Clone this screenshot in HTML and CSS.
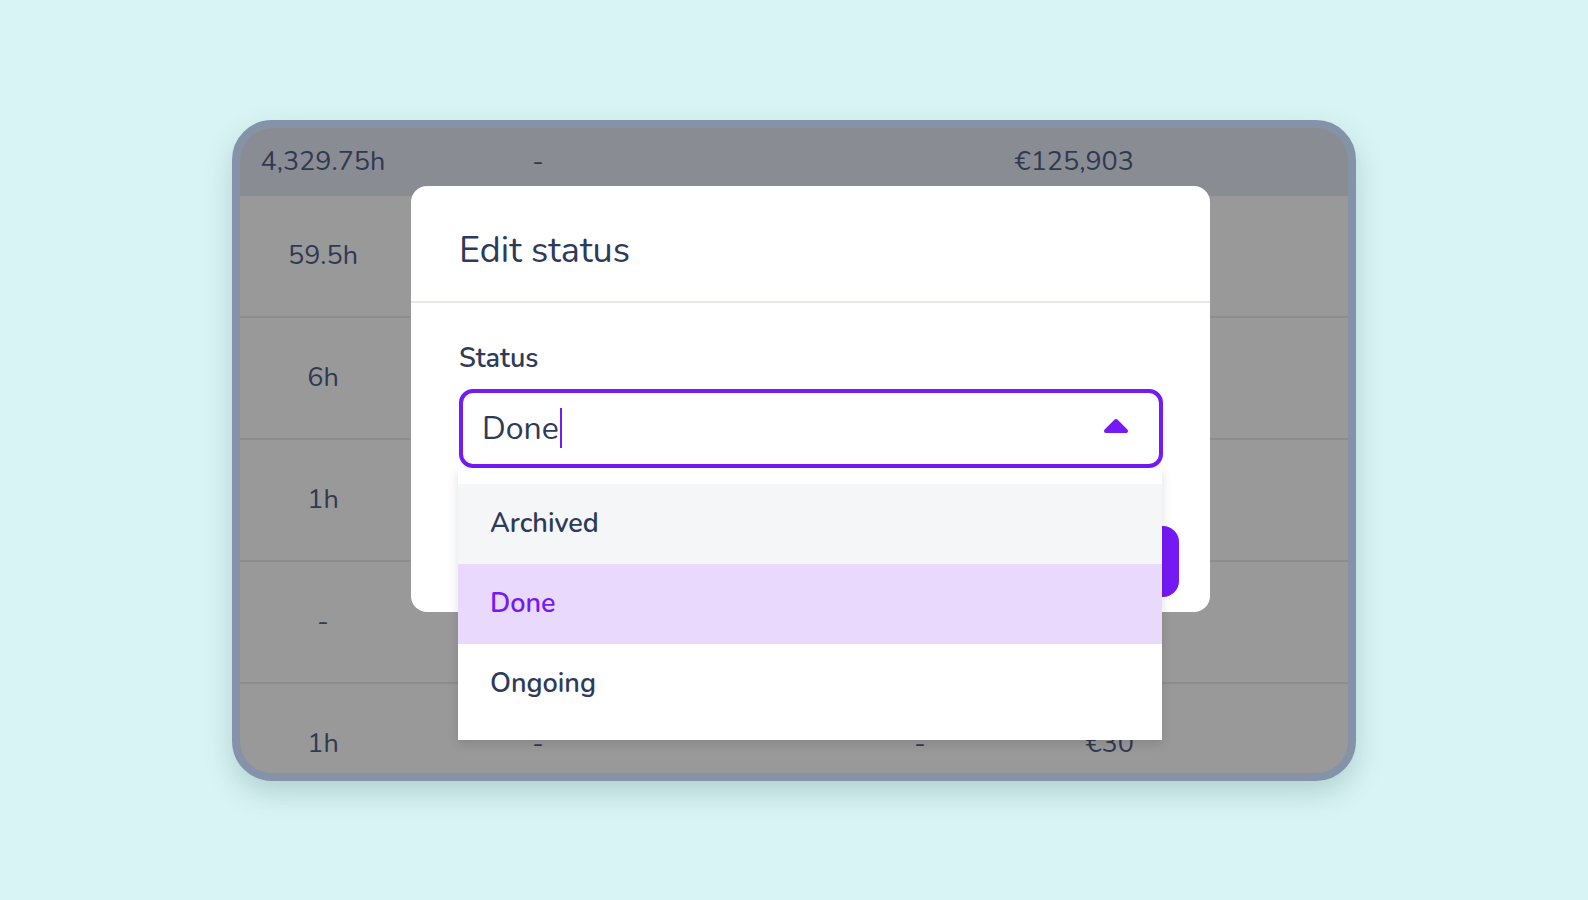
FILE: index.html
```html
<!DOCTYPE html>
<html lang="en">
<head>
    <meta charset="UTF-8">
    <meta name="viewport" content="width=device-width, initial-scale=1.0">
    <title>Edit status</title>
    <link rel="stylesheet" href="styles.css">
</head>
<body>
    <div class="stage">
        <div class="card">
            <div class="table">
                <div class="row head">
                    <div class="c1">4,329.75h</div>
                    <div class="c2">-</div>
                    <div class="c3"></div>
                    <div class="c4">€125,903</div>
                </div>
                <div class="row">
                    <div class="c1">59.5h</div>
                    <div class="c2">-</div>
                    <div class="c3">-</div>
                    <div class="c4">€1,240</div>
                </div>
                <div class="row">
                    <div class="c1">6h</div>
                    <div class="c2">-</div>
                    <div class="c3">-</div>
                    <div class="c4">€180</div>
                </div>
                <div class="row">
                    <div class="c1">1h</div>
                    <div class="c2">-</div>
                    <div class="c3">-</div>
                    <div class="c4">€30</div>
                </div>
                <div class="row">
                    <div class="c1">-</div>
                    <div class="c2">-</div>
                    <div class="c3">-</div>
                    <div class="c4">-</div>
                </div>
                <div class="row">
                    <div class="c1">1h</div>
                    <div class="c2">-</div>
                    <div class="c3">-</div>
                    <div class="c4">€30</div>
                </div>
            </div>

            <div class="modal">
                <div class="modal-head">
                    <h2>Edit status</h2>
                </div>
                <div class="modal-body">
                    <label class="field-label">Status</label>
                    <div class="select">
                        <span class="value">Done</span><span class="caret"></span>
                        <svg class="arrow" width="26" height="16" viewBox="0 0 26 16">
                            <path d="M13 3 L23 13 L3 13 Z" fill="#7519f5" stroke="#7519f5" stroke-width="4" stroke-linejoin="round"/>
                        </svg>
                        <ul class="options">
                            <li class="hover">Archived</li>
                            <li class="selected">Done</li>
                            <li>Ongoing</li>
                        </ul>
                    </div>
                    <div class="actions">
                        <button class="save">Save</button>
                    </div>
                </div>
            </div>
        </div>
    </div>
</body>
</html>
```

FILE: styles.css
```css
html, body {
    margin: 0;
    padding: 0;
}
body {
    background-color: #d9f4f4;
    font-family: "Nunito", "Lato", "Open Sans", sans-serif;
    color: #2e3a59;
}
.stage {
    height: 900px;
    display: flex;
    align-items: center;
    justify-content: center;
}
.card {
    position: relative;
    width: 1124px;
    height: 661px;
    box-sizing: border-box;
    border: 8px solid #8593a8;
    border-radius: 40px;
    overflow: hidden;
    background-color: #999999;
    box-shadow: 0 12px 28px rgba(40, 90, 90, 0.22);
}

/* table behind the overlay */
.table {
    font-size: 27px;
    color: #2f3a52;
}
.row {
    display: grid;
    grid-template-columns: 166px 264px 340px 124px 1fr;
    align-items: center;
    height: 122px;
    box-sizing: border-box;
    border-bottom: 2px solid #8d8d8d;
}
.row.head {
    height: 68px;
    background-color: #8a8c94;
    border-bottom: none;
}
.c1, .c2 {
    text-align: center;
}
.c3 {
    padding-left: 160px;
    text-align: center;
}
.c4 {
    text-align: right;
    white-space: nowrap;
}

/* modal */
.modal {
    position: absolute;
    left: 171px;
    top: 58px;
    width: 799px;
    background-color: #ffffff;
    border-radius: 16px;
}
.modal-head {
    height: 117px;
    box-sizing: border-box;
    padding: 45px 48px 0;
    border-bottom: 2px solid #e6e7ea;
}
.modal-head h2 {
    margin: 0;
    font-size: 36px;
    font-weight: 400;
    line-height: 40px;
    color: #2e3a59;
}
.modal-body {
    padding: 40px 47px 15px 48px;
}
.field-label {
    display: block;
    font-size: 27px;
    font-weight: 600;
    line-height: 32px;
    margin-bottom: 14px;
}
.select {
    position: relative;
    display: flex;
    align-items: center;
    height: 79px;
    box-sizing: border-box;
    border: 4px solid #7519f5;
    border-radius: 14px;
    padding: 0 30px 0 19px;
}
.value {
    font-size: 32px;
    color: #2e3a59;
}
.caret {
    display: inline-block;
    width: 2px;
    height: 40px;
    margin-left: 1px;
    background-color: #7519f5;
}
.arrow {
    margin-left: auto;
    margin-top: -4px;
}
.options {
    position: absolute;
    top: 100%;
    left: -5px;
    right: -3px;
    margin: 4px 0 0;
    padding: 16px 0;
    list-style: none;
    background-color: #ffffff;
    box-shadow: 0 4px 10px rgba(0, 0, 0, 0.12);
    z-index: 2;
}
.options li {
    height: 80px;
    display: flex;
    align-items: center;
    padding-left: 32px;
    font-size: 27px;
    font-weight: 600;
    color: #2e3a59;
}
.options li.hover {
    background-color: #f5f6f8;
}
.options li.selected {
    background-color: #e8d9fd;
    color: #7519f5;
}
.actions {
    display: flex;
    justify-content: flex-end;
    margin-top: 58px;
    margin-right: -16px;
}
.save {
    width: 180px;
    height: 71px;
    border: none;
    border-radius: 16px;
    background-color: #7519f5;
    color: #ffffff;
    font-family: inherit;
    font-size: 26px;
    font-weight: 600;
}
```
